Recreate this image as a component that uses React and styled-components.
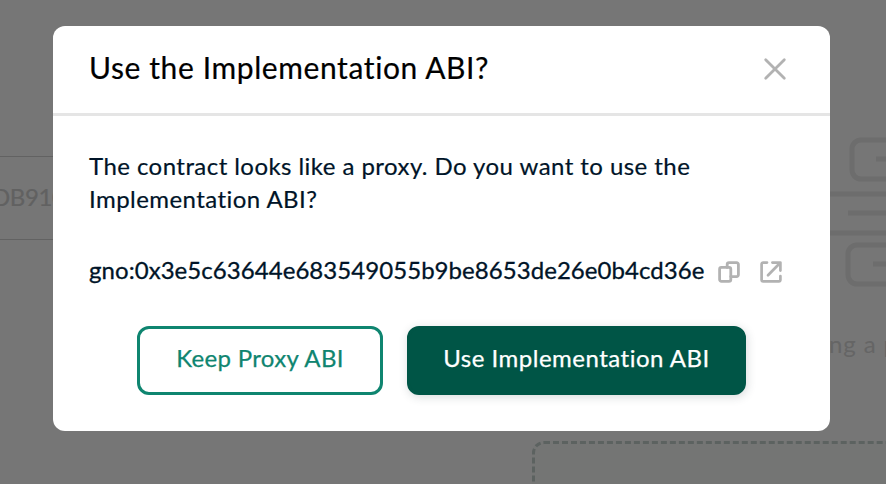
import React from 'react';
import styled, { createGlobalStyle, css } from 'styled-components';

const GlobalStyle = createGlobalStyle`
  *,
  *::before,
  *::after {
    box-sizing: border-box;
  }

  body {
    margin: 0;
    overflow: hidden;
    background: #ececec;
    color: #001428;
    font-family: Lato, 'Open Sans', sans-serif;
    font-size: 24px;
    line-height: 33px;
  }

  h2,
  p {
    margin: 0;
  }
`;

const Page = styled.main`
  display: grid;
  grid-template-columns: 400px 1fr;
  column-gap: 132px;
  height: 484px;
  overflow: hidden;
`;

const FormColumn = styled.section`
  padding-top: 156px;
`;

const AddressField = styled.div`
  height: 84px;
  padding-top: 23px;
  border: solid #c4c4c4;
  border-width: 1px 0;
  color: #c2c2c2;
  text-indent: -8px;
  letter-spacing: -0.4px;
  -webkit-text-stroke: 0.2px;
`;

const BatchColumn = styled.section`
  display: flex;
  flex-direction: column;
  padding-top: 132px;
`;

const Illustration = styled.svg`
  width: 64px;
  height: 160px;
  margin-left: 292px;
  flex: none;
`;

const Hint = styled.p`
  margin: 35px 0 0 297px;
  color: #cacaca;
  letter-spacing: 0.9px;
  white-space: nowrap;
`;

const DropZone = styled.div`
  flex: none;
  width: 420px;
  height: 120px;
  margin-top: 81px;
  border: 3px dashed #b8c4c1;
  border-radius: 12px;
  background: #e8eae9;
`;

const Backdrop = styled.div`
  position: fixed;
  inset: 0;
  display: flex;
  align-items: flex-start;
  padding: 26px 0 0 53px;
  background: rgba(0, 0, 0, 0.5);
`;

const Modal = styled.div`
  width: 777px;
  height: 405px;
  border-radius: 12px;
  background: #fff;
`;

const ModalHeader = styled.header`
  display: flex;
  align-items: center;
  justify-content: space-between;
  height: 90px;
  padding: 0 43px 1px 36px;
  border-bottom: 3px solid #e5e5e5;
`;

const ModalTitle = styled.h2`
  padding-bottom: 4px;
  color: #000;
  font-size: 30px;
  font-weight: 400;
  line-height: 36px;
  letter-spacing: 0.6px;
  -webkit-text-stroke: 0.2px;
`;

const IconButton = styled.button`
  display: flex;
  padding: 0;
  border: 0;
  background: none;
  color: #b2b2b2;
  cursor: pointer;

  svg {
    display: block;
    fill: none;
    stroke: currentColor;
    stroke-linecap: round;
    stroke-linejoin: round;
  }
`;

const ModalBody = styled.div`
  padding: 33px 36px 0;
`;

const Message = styled.p`
  letter-spacing: 0.44px;
  -webkit-text-stroke: 0.2px;
`;

const AddressRow = styled.div`
  display: flex;
  align-items: center;
  margin-top: 38px;
`;

const Address = styled.span`
  width: 629px;
  white-space: nowrap;
  letter-spacing: 0.05px;
  -webkit-text-stroke: 0.3px;
`;

const AddressActions = styled.div`
  display: flex;
  gap: 20px;
  padding-top: 4px;
`;

const Actions = styled.footer`
  display: flex;
  justify-content: center;
  gap: 24px;
  margin-top: 40px;
`;

const Button = styled.button`
  width: 246px;
  height: 69px;
  padding: 0 0 6px;
  border: 3px solid #0f8570;
  border-radius: 12px;
  background: #fff;
  color: #0f8570;
  font: inherit;
  letter-spacing: 0.34px;
  white-space: nowrap;
  -webkit-text-stroke: 0.25px;
  cursor: pointer;

  ${({ $primary }) =>
    $primary &&
    css`
      width: 339px;
      border-color: #005546;
      background: #005546;
      box-shadow: 1px 2px 10px rgba(40, 54, 61, 0.18);
      color: #fff;
      letter-spacing: 0.5px;
    `}
`;

function CloseIcon() {
  return (
    <svg width='24' height='24' viewBox='0 0 24 24' strokeWidth='2.8'>
      <path d='M2.7 2.7l18.6 18.6M21.3 2.7L2.7 21.3' />
    </svg>
  );
}

function CopyIcon() {
  return (
    <svg width='22' height='22' viewBox='0 0 22 22' strokeWidth='2.8'>
      <rect x='1.6' y='6.4' width='11.2' height='14' rx='1.8' />
      <path d='M9.2 6.4V3.4a1.8 1.8 0 0 1 1.8-1.8h7.6a1.8 1.8 0 0 1 1.8 1.8v10.4a1.8 1.8 0 0 1-1.8 1.8h-5.8' />
    </svg>
  );
}

function ExternalLinkIcon() {
  return (
    <svg width='22' height='22' viewBox='0 0 22 22' strokeWidth='2.7'>
      <path d='M7 1.6H3.2a1.6 1.6 0 0 0-1.6 1.6v15.6a1.6 1.6 0 0 0 1.6 1.6h15.6a1.6 1.6 0 0 0 1.6-1.6V15' />
      <path d='M12.4 1.6h8v8M20 2L8 14.2' />
    </svg>
  );
}

function BlocksIllustration() {
  return (
    <Illustration viewBox='0 0 64 160' fill='none' stroke='#dadada' strokeWidth='5'>
      <rect x='28' y='8' width='80' height='39' rx='9' />
      <path d='M52 27h12M6 62h58M24 81h40M6 101h58M49 132h15' />
      <rect x='24' y='113' width='80' height='39' rx='9' />
    </Illustration>
  );
}

function App() {
  return (
    <>
      <GlobalStyle />
      <Page>
        <FormColumn>
          <AddressField>DB910</AddressField>
        </FormColumn>
        <BatchColumn>
          <BlocksIllustration />
          <Hint>ng a p</Hint>
          <DropZone />
        </BatchColumn>
      </Page>
      <Backdrop>
        <Modal role='dialog' aria-modal='true' aria-labelledby='modal-title'>
          <ModalHeader>
            <ModalTitle id='modal-title'>Use the Implementation ABI?</ModalTitle>
            <IconButton aria-label='Close'>
              <CloseIcon />
            </IconButton>
          </ModalHeader>
          <ModalBody>
            <Message>
              The contract looks like a proxy. Do you want to use the
              <br />
              Implementation ABI?
            </Message>
            <AddressRow>
              <Address>gno:0x3e5c63644e683549055b9be8653de26e0b4cd36e</Address>
              <AddressActions>
                <IconButton aria-label='Copy address'>
                  <CopyIcon />
                </IconButton>
                <IconButton aria-label='Open in explorer'>
                  <ExternalLinkIcon />
                </IconButton>
              </AddressActions>
            </AddressRow>
            <Actions>
              <Button>Keep Proxy ABI</Button>
              <Button $primary>Use Implementation ABI</Button>
            </Actions>
          </ModalBody>
        </Modal>
      </Backdrop>
    </>
  );
}

export default App;
